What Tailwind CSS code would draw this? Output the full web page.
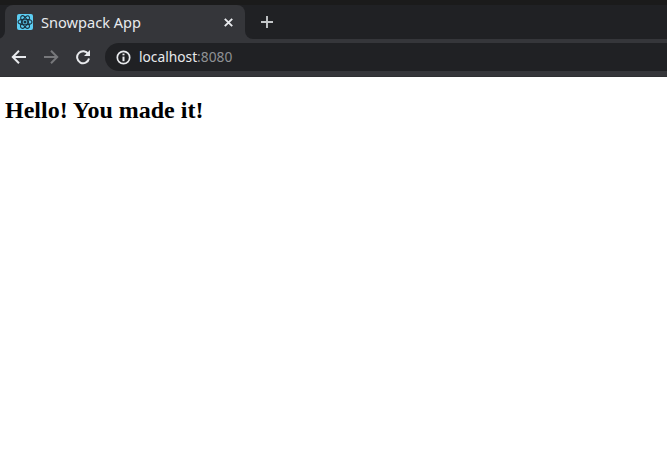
<!DOCTYPE html>
<html>
<head>
<meta charset="utf-8">
<script src="https://cdn.jsdelivr.net/npm/@tailwindcss/browser@4"></script>
<title>Snowpack App</title>
</head>
<body class="bg-white overflow-hidden">
<div class="w-[667px] h-[455px] flex flex-col bg-white">
  <!-- tab strip -->
  <div class="h-[39px] shrink-0 bg-[#202124] flex flex-col">
    <div class="h-[5px] bg-[#1b1b1b]"></div>
    <div class="flex-1 flex items-stretch pl-[5px]">
      <div class="relative w-[240px] bg-[#35363a] rounded-t-[8px] flex items-center pl-[12px] pr-[11px]">
        <div class="absolute -left-[8px] bottom-0 w-[8px] h-[8px] bg-[#35363a]"><div class="w-full h-full bg-[#202124] rounded-br-[8px]"></div></div>
        <div class="absolute -right-[8px] bottom-0 w-[8px] h-[8px] bg-[#35363a]"><div class="w-full h-full bg-[#202124] rounded-bl-[8px]"></div></div>
        <svg class="w-[16px] h-[16px] shrink-0" viewBox="0 0 16 16">
          <rect width="16" height="16" rx="2" fill="#5ccdf2"/>
          <g fill="none" stroke="#1a3240" stroke-width="1.1">
            <ellipse cx="8" cy="8" rx="7" ry="2.8"/>
            <ellipse cx="8" cy="8" rx="7" ry="2.8" transform="rotate(60 8 8)"/>
            <ellipse cx="8" cy="8" rx="7" ry="2.8" transform="rotate(120 8 8)"/>
          </g>
          <circle cx="8" cy="8" r="1.5" fill="#1a3240"/>
        </svg>
        <span class="ml-[8px] flex-1 text-[14.6px] leading-none text-[#e8eaed] font-['Noto_Sans',sans-serif] whitespace-nowrap">Snowpack App</span>
        <svg class="w-[9px] h-[9px] shrink-0 mr-[1px]" viewBox="0 0 9 9"><path d="M.8.8 8.2 8.2M8.2.8.8 8.2" stroke="#e8eaed" stroke-width="1.9" fill="none"/></svg>
      </div>
      <div class="ml-[16px] flex items-center">
        <svg class="w-[12px] h-[12px]" viewBox="0 0 12 12"><path d="M6 0V12M0 6H12" stroke="#c4c7c9" stroke-width="1.9" fill="none"/></svg>
      </div>
    </div>
  </div>
  <!-- toolbar -->
  <div class="h-[38px] shrink-0 bg-[#35363a] flex items-start pt-[4px] border-b border-b-[#2f3033]">
    <div class="w-[105px] h-[28px] shrink-0 flex items-center pl-[11px] gap-[16px]">
      <svg class="w-[16px] h-[16px]" viewBox="0 0 16 16"><path d="M15 8H2M8 1.8 1.8 8 8 14.2" stroke="#e8eaed" stroke-width="2" fill="none"/></svg>
      <svg class="w-[16px] h-[16px]" viewBox="0 0 16 16"><path d="M1 8H14M8 1.8 14.2 8 8 14.2" stroke="#77787b" stroke-width="2" fill="none"/></svg>
      <svg class="w-[16px] h-[16px]" viewBox="0 0 16 16"><path d="M13.3 5.2A6 6 0 1 0 14 9.5" stroke="#e8eaed" stroke-width="2" fill="none"/><path d="M15 1V7H9Z" fill="#e8eaed"/></svg>
    </div>
    <div class="flex-1 h-[28px] bg-[#202124] rounded-l-[14px] flex items-center pl-[11px]">
      <svg class="w-[15px] h-[15px] shrink-0" viewBox="0 0 15 15"><circle cx="7.5" cy="7.5" r="6.2" stroke="#e8eaed" stroke-width="1.7" fill="none"/><path d="M7.5 6.6V11.2" stroke="#e8eaed" stroke-width="2"/><path d="M7.5 3.6V5.3" stroke="#e8eaed" stroke-width="2"/></svg>
      <span class="ml-[8px] text-[13.75px] leading-none font-['Noto_Sans',sans-serif] text-[#e8eaed] whitespace-nowrap">localhost<span class="text-[#8f9194]">:8080</span></span>
    </div>
  </div>
  <!-- page -->
  <div class="flex-1 bg-white pl-[5px] pt-[20px]">
    <h1 class="text-[24px] leading-[27px] font-bold text-black font-['Liberation_Serif',serif]">Hello! You made it!</h1>
  </div>
</div>
</body>
</html>
